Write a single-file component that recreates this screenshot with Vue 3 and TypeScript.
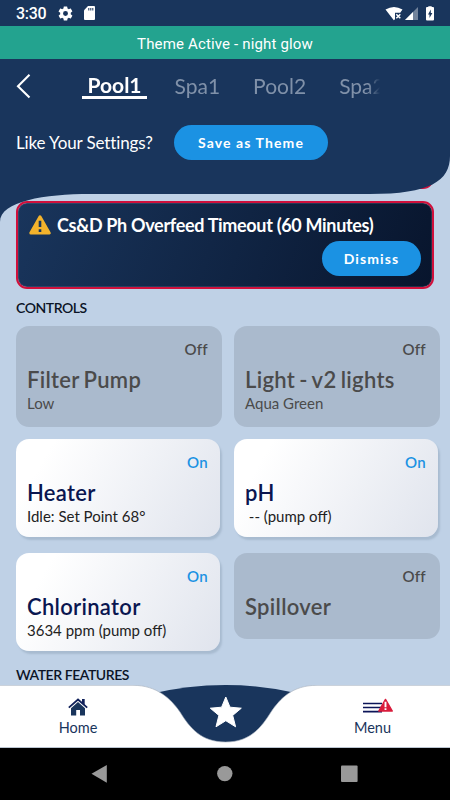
<script setup lang="ts">
interface Control {
  name: string
  on: boolean
  detail?: string
  short?: boolean
}

const tabs: string[] = ['Pool1', 'Spa1', 'Pool2', 'Spa2']
const active = 'Pool1'

const controls: Control[] = [
  { name: 'Filter Pump', on: false, detail: 'Low' },
  { name: 'Light - v2 lights', on: false, detail: 'Aqua Green' },
  { name: 'Heater', on: true, detail: 'Idle: Set Point 68°' },
  { name: 'pH', on: true, detail: '\u00a0-- (pump off)' },
  { name: 'Chlorinator', on: true, detail: '3634 ppm (pump off)' },
  { name: 'Spillover', on: false, short: true },
]
</script>

<template>
  <div class="screen">
    <div class="status">
      <span class="clock">3:30</span>
      <svg class="gear" viewBox="0 0 24 24"><path fill="#fff" fill-rule="evenodd" d="M19.4 13c.04-.3.06-.66.06-1s-.02-.7-.07-1l2.1-1.65c.2-.15.25-.42.13-.64l-2-3.46c-.12-.22-.39-.3-.61-.22l-2.49 1c-.52-.4-1.08-.73-1.69-.98l-.38-2.65A.49.49 0 0 0 14 2h-4c-.25 0-.46.18-.5.42l-.37 2.65c-.61.25-1.17.59-1.69.98l-2.49-1c-.22-.08-.49 0-.61.22l-2 3.46c-.13.22-.07.49.12.64L4.57 11c-.04.3-.07.66-.07 1s.03.7.07 1l-2.11 1.65c-.19.15-.24.42-.12.64l2 3.46c.12.22.39.3.61.22l2.49-1c.52.4 1.08.73 1.69.98l.38 2.65c.03.24.24.42.49.42h4c.25 0 .46-.18.49-.42l.38-2.65c.61-.25 1.17-.58 1.69-.98l2.49 1c.23.09.49 0 .61-.22l2-3.46c.12-.22.07-.49-.12-.64L19.400 13zM12 15.500A3.500 3.500 0 1 1 12 8.500a3.500 3.500 0 0 1 0 7z" /></svg>
      <svg class="sd" viewBox="0 0 11 14"><path fill="#fff" d="M4 0h6q1 0 1 1v12q0 1-1 1H1q-1 0-1-1V4.200z" /><path stroke="#19355c" stroke-width="1" d="M4.800 2v2.500M6.800 2v2.500M8.800 2v2.500" /></svg>
      <svg class="signals" viewBox="0 0 52 16">
        <path fill="#fff" d="M.5 3.500Q9 -1.500 17.500 3.500L15.200 6.700H10v6.600L8.800 14.300z" />
        <path stroke="#fff" stroke-width="1.500" d="M11.300 8.300l4 4M15.300 8.300l-4 4" />
        <path fill="#72839b" d="M33 1v13H20z" />
        <path fill="#fff" d="M28 6v8h-8z" />
        <path fill="#fff" d="M43.300 1v-.8h3.400V1H48q1 0 1 1v11.500q0 1-1 1h-6q-1 0-1-1V2q0-1 1-1z" />
        <path fill="#19355c" d="M45.800 3.600v3.500H47.400L44.500 12V8.500H43z" />
      </svg>
    </div>
    <div class="banner">Theme Active - night glow</div>

    <header class="header">
      <svg class="header-shape" viewBox="0 0 450 163">
        <path fill="#19355c" d="M0 0H450V97C450 122 430 135 370 135H90C45 135 0 142 0 163Z" />
      </svg>
      <div class="tab-row">
        <svg class="back" viewBox="0 0 16 26"><path d="M13.500 1.800L2 13.200L13.500 24.500" fill="none" stroke="#fff" stroke-width="2.100" /></svg>
        <nav class="tabs">
          <span v-for="tab in tabs" :key="tab" class="tab" :class="{ active: tab === active }">{{ tab }}</span>
        </nav>
      </div>
      <div class="theme-row">
        <span class="question">Like Your Settings?</span>
        <button class="pill save">Save as Theme</button>
      </div>
    </header>

    <main class="content">
      <div class="alert previous"></div>
      <section class="alert">
        <div class="alert-title">
          <svg class="warn" viewBox="0 0 22 20"><path d="M11 1.800L20.200 18H1.800z" fill="#f3b32c" stroke="#f3b32c" stroke-width="3" stroke-linejoin="round" /><path d="M11 5.800v6.200M11 14.200v2.800" stroke="#19355c" stroke-width="2.600" /></svg>
          <span>Cs&amp;D Ph Overfeed Timeout (60 Minutes)</span>
        </div>
        <button class="pill dismiss">Dismiss</button>
      </section>

      <h2 class="heading">CONTROLS</h2>
      <div class="grid">
        <article v-for="c in controls" :key="c.name" class="card" :class="{ on: c.on, short: c.short }">
          <span class="state">{{ c.on ? 'On' : 'Off' }}</span>
          <span class="name">{{ c.name }}</span>
          <span v-if="c.detail" class="detail">{{ c.detail }}</span>
        </article>
      </div>
      <h2 class="heading water">WATER FEATURES</h2>
    </main>

    <footer class="bottom">
      <svg class="bottom-shape" viewBox="0 0 450 63">
        <path fill="#19355c" d="M150 9Q225.500 -9 301 9L280 50Q225 70 171 50Z" />
        <path fill="#fff" stroke="#a3adba" stroke-width=".6" d="M-1 .300H133C157 .300 171 14 180 27C190 43 201 57 225.500 57C250 57 261 43 271 27C280 14 292 .300 317 .300H451V62.500H-1Z" />
        <path fill="#fff" stroke="#fff" stroke-width="1" stroke-linejoin="round" d="M225.800 12L230 22.200L241.300 23.200L232.700 30.400L235.600 41.800L225.800 35.700L216 41.800L218.900 30.400L210.300 23.200L221.600 22.200Z" />
      </svg>
      <div class="link home">
        <svg viewBox="0 0 20 18"><path fill="#19355c" d="M10 4L17 10.300V17.500H12V12H8.200V17.500H3V10.300z" /><path fill="none" stroke="#10215a" stroke-width="1.800" d="M.8 9.600L10 1.500L19.200 9.600" /><path fill="#10215a" d="M14 1h2.700v6L14 4.700z" /></svg>
        <span>Home</span>
      </div>
      <div class="link menu">
        <svg viewBox="0 0 32 18"><path stroke="#0c1558" stroke-width="1.700" d="M1 5.500H20M1 9.500H20M1 13.600H20" /><path fill="#d91c3c" stroke="#d91c3c" stroke-width="1.400" stroke-linejoin="round" d="M23.500 1.400L30.300 13H16.800z" /><path stroke="#fff" stroke-width="1.900" d="M23.500 3.800v5.400M23.500 10.200v1.900" /></svg>
        <span>Menu</span>
      </div>
    </footer>
    <div class="android">
      <svg viewBox="0 0 450 52"><path fill="#999" d="M91.500 25.800L106.800 17V34.800Z" /><circle cx="224.800" cy="25.600" r="7.700" fill="#999" /><rect x="341" y="17.500" width="16.600" height="16.600" rx="1" fill="#999" /></svg>
    </div>
  </div>
</template>

<style>
body {
  margin: 0;
}
</style>

<style scoped>
.screen {
  position: relative;
  display: flex;
  flex-direction: column;
  width: 450px;
  height: 800px;
  overflow: hidden;
  background: #bfd1e6;
  color: #fff;
  font-family: Lato, "Liberation Sans", sans-serif;
}
svg {
  display: block;
}
.status {
  display: flex;
  flex: none;
  align-items: center;
  box-sizing: border-box;
  height: 26px;
  padding: 2px 13px 0 16px;
  background: #19355c;
}
.clock {
  width: 41px;
  font: 500 16px/24px Roboto, sans-serif;
  letter-spacing: -0.3px;
}
.gear {
  width: 17px;
  height: 17px;
  margin-top: -2px;
}
.sd {
  width: 11px;
  height: 14px;
  margin-left: 10px;
  margin-top: -2px;
}
.signals {
  width: 52px;
  height: 16px;
  margin-left: auto;
}
.banner {
  flex: none;
  height: 33px;
  background: #23a38f;
  font: 400 15px/37px Roboto, sans-serif;
  letter-spacing: 0.15px;
  text-align: center;
}
.header {
  position: relative;
  z-index: 2;
  flex: none;
  height: 135px;
}
.header-shape {
  position: absolute;
  inset: 0 auto auto 0;
  width: 450px;
  height: 163px;
}
.tab-row {
  position: relative;
  display: flex;
  align-items: center;
  height: 54px;
  padding-left: 16px;
}
.back {
  width: 16px;
  height: 26px;
}
.tabs {
  display: flex;
  align-items: flex-start;
  width: 298px;
  height: 32px;
  margin-left: 50px;
  overflow: hidden;
  mask-image: linear-gradient(90deg, #000 286px, transparent 298px);
}
.tab {
  flex: none;
  height: 26px;
  margin-right: 33px;
  color: #8091a9;
  font-size: 21px;
  line-height: 32px;
}
.tab.active {
  box-sizing: border-box;
  height: 29px;
  margin-right: 27.500px;
  padding: 0 5.5px;
  border-bottom: 3px solid #fff;
  color: #fff;
  font-weight: 700;
  line-height: 30px;
}
.theme-row {
  position: relative;
  display: flex;
  align-items: center;
  height: 35px;
  margin-top: 12px;
  padding-left: 16px;
}
.question {
  width: 158px;
  font-size: 17px;
  letter-spacing: -0.12px;
  white-space: nowrap;
}
.pill {
  padding: 0;
  border: 0;
  border-radius: 18px;
  background: #1b92e3;
  color: #fff;
  font-family: inherit;
  font-size: 14px;
  font-weight: 700;
  line-height: 35px;
  letter-spacing: 1.1px;
}
.save {
  width: 154px;
}
.content {
  flex: 1;
  margin-top: -30px;
  min-height: 0;
  padding: 0 10px 0 16px;
}
.alert {
  box-sizing: border-box;
  width: 418px;
  height: 88px;
  padding: 10px 11px;
  border: 2px solid #d0103c;
  border-radius: 11px;
  background: linear-gradient(110deg, #19355c, #08152d) padding-box;
  box-shadow: inset 0 0 0 1px #71809c40;
}
.alert.previous {
  height: 25px;
  margin-bottom: 12px;
}
.alert-title {
  display: flex;
  align-items: center;
  height: 24px;
  font-size: 18px;
  font-weight: 700;
  letter-spacing: -0.32px;
  white-space: nowrap;
}
.warn {
  width: 22px;
  height: 20px;
  margin-right: 6px;
}
.dismiss {
  display: block;
  width: 99px;
  margin: 4px 0 0 auto;
}
.heading {
  margin: 10px 0 0;
  color: #0b1426;
  font-size: 14px;
  font-weight: 600;
  line-height: 18px;
  letter-spacing: -0.45px;
}
.grid {
  display: grid;
  grid-template-columns: 206px 206px;
  gap: 12.400px 12px;
  align-items: start;
  margin-top: 9px;
}
.card {
  display: flex;
  flex-direction: column;
  box-sizing: border-box;
  height: 101px;
  padding: 13px 14px 0 11px;
  border-radius: 13px;
  background: #aabacd;
  color: #4b4b4b;
}
.card.short {
  height: 86px;
}
.card.on {
  width: 204px;
  height: 98px;
  margin-bottom: 3px;
  padding-right: 12px;
  background: linear-gradient(120deg, #fff 15%, #e0e4ed);
  box-shadow: 2px 3px 2px #a8bbd0;
  color: #222;
}
.state {
  align-self: flex-end;
  font-size: 15px;
  font-weight: 600;
  line-height: 20px;
  letter-spacing: 0.3px;
}
.on .state {
  color: #1b92e3;
}
.name {
  margin-top: 6px;
  font-size: 22px;
  font-weight: 600;
  line-height: 29px;
  letter-spacing: 0.3px;
  word-spacing: -1.500px;
}
.on .name {
  color: #0a1650;
}
.detail {
  margin-top: -1px;
  font-size: 15px;
  line-height: 20px;
}
.heading.water {
  margin-top: 12px;
}
.bottom {
  position: relative;
  display: flex;
  flex: none;
  justify-content: space-between;
  height: 63px;
}
.bottom-shape {
  position: absolute;
  inset: 0;
  width: 450px;
  height: 63px;
}
.link {
  position: relative;
  display: flex;
  flex-direction: column;
  align-items: center;
  width: 156px;
  padding-top: 13px;
  color: #19355c;
  font-size: 14.500px;
  line-height: 24px;
}
.link svg {
  height: 18px;
}
.menu {
  width: 155px;
}
.menu svg {
  width: 32px;
  margin-left: 11px;
}
.android {
  flex: none;
  height: 52px;
  background: #000;
}
</style>
